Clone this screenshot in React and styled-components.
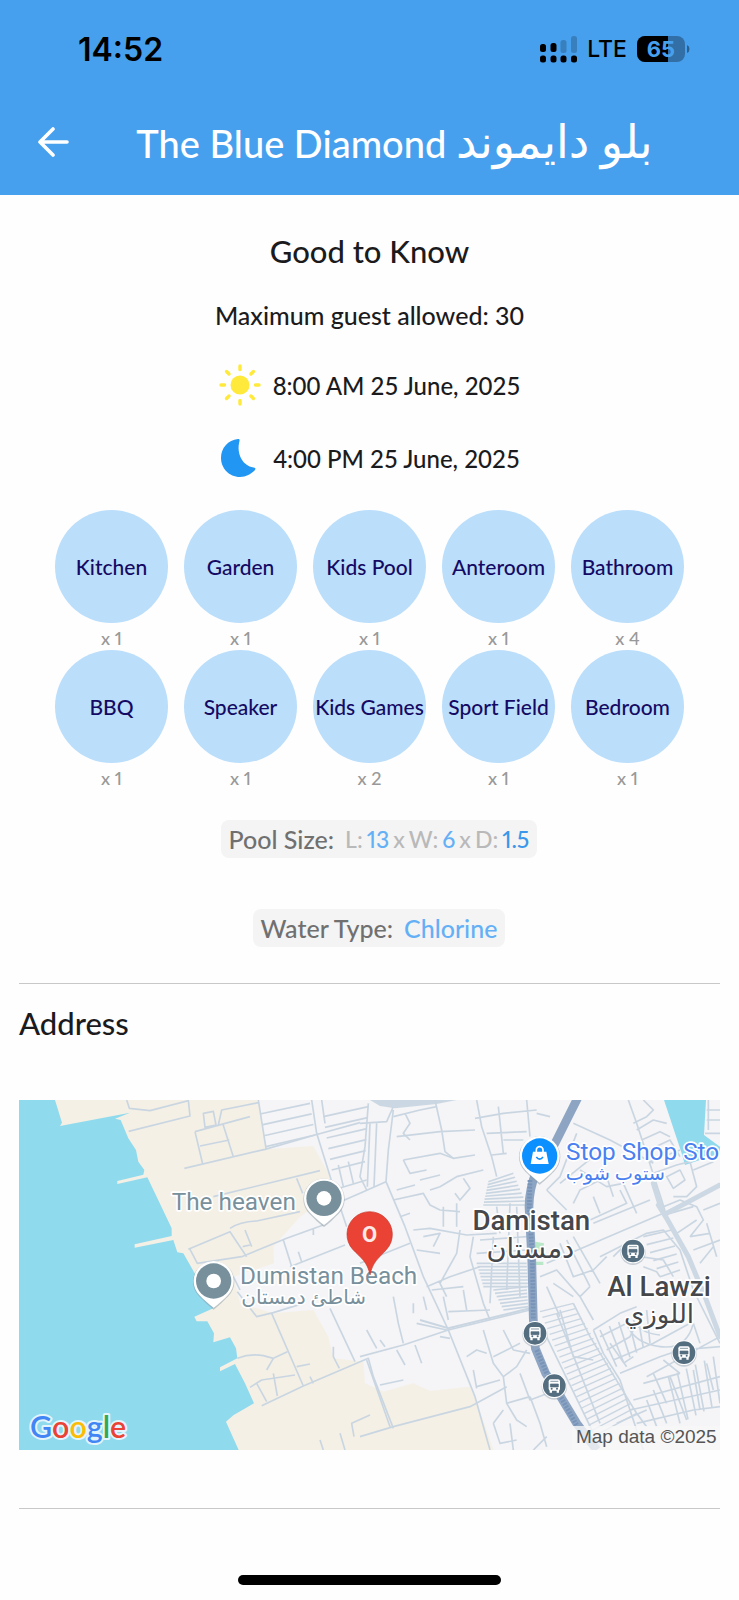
import styled, { createGlobalStyle } from 'styled-components';

const amenities = [
  { name: 'Kitchen', count: 1 },
  { name: 'Garden', count: 1 },
  { name: 'Kids Pool', count: 1 },
  { name: 'Anteroom', count: 1 },
  { name: 'Bathroom', count: 4 },
  { name: 'BBQ', count: 1 },
  { name: 'Speaker', count: 1 },
  { name: 'Kids Games', count: 2 },
  { name: 'Sport Field', count: 1 },
  { name: 'Bedroom', count: 1 },
];

export default function App() {
  return (
    <>
      <GlobalStyle />
      <Header>
        <StatusBar>
          <Clock>14:52</Clock>
          <StatusIcons>
            <Signal />
            <Network>LTE</Network>
            <Battery />
          </StatusIcons>
        </StatusBar>
        <TitleBar>
          <BackButton aria-label="Back">
            <svg width="32" height="32" viewBox="0 0 32 32" fill="none" stroke="#fff" strokeWidth="3.600" strokeLinecap="round" strokeLinejoin="round">
              <path d="M29 16H3M15 3L2 16l13 13" />
            </svg>
          </BackButton>
          <Title>The Blue Diamond <bdi lang="ar">بلو دايموند</bdi></Title>
        </TitleBar>
      </Header>

      <Main>
        <Section>
          <Heading>Good to Know</Heading>
          <Guests>Maximum guest allowed: 30</Guests>
          <TimeRow>
            <Sun />
            <span>8:00 AM 25 June, 2025</span>
          </TimeRow>
          <TimeRow>
            <Moon />
            <span>4:00 PM 25 June, 2025</span>
          </TimeRow>

          <Amenities>
            {amenities.map((item) => (
              <Amenity key={item.name}>
                <Circle>{item.name}</Circle>
                <Count>x {item.count}</Count>
              </Amenity>
            ))}
          </Amenities>

          <Pill>
            <PillLabel>Pool Size:</PillLabel>
            <Dimensions>
              <span>L:</span>
              <Value>13</Value>
              <span>x</span>
              <span>W:</span>
              <Value>6</Value>
              <span>x</span>
              <span>D:</span>
              <Value $strong>1.5</Value>
            </Dimensions>
          </Pill>
          <Pill>
            <PillLabel>Water Type:</PillLabel>
            <Value>Chlorine</Value>
          </Pill>
        </Section>

        <Divider />
        <AddressTitle>Address</AddressTitle>
        <Map />
        <Divider />
      </Main>
      <HomeBar />
    </>
  );
}

function Signal() {
  return (
    <svg width="37" height="27" viewBox="0 0 37 27">
      <g opacity=".2">
        <rect x="20.500" y="4" width="6" height="13" rx="2.500" />
        <rect x="31" y="0" width="6" height="17" rx="2.500" />
      </g>
      <rect x="0" y="8" width="6" height="8" rx="2.500" />
      <rect x="10.500" y="7" width="6" height="9" rx="2.500" />
      {[0, 10.5, 20.5, 31].map((x) => (
        <rect key={x} x={x} y="19.500" width="6" height="7" rx="2.500" />
      ))}
    </svg>
  );
}

function Battery() {
  return (
    <svg width="53" height="26" viewBox="0 0 53 26">
      <defs>
        <clipPath id="charge">
          <rect width="31" height="26" />
        </clipPath>
      </defs>
      <rect width="48" height="26" rx="8" opacity=".3" />
      <rect width="48" height="26" rx="8" clipPath="url(#charge)" />
      <path d="M50 9q2.500 1 2.500 4t-2.500 4z" opacity=".4" />
      <text x="24" y="21" textAnchor="middle" fontFamily="Inter, sans-serif" fontWeight="700" fontSize="22" fill="#47a0ee">65</text>
    </svg>
  );
}

function Sun() {
  return (
    <svg width="42" height="42" viewBox="0 0 42 42">
      <circle cx="21" cy="21" r="9.500" fill="#ffe93b" />
      <g stroke="#ffe93b" strokeWidth="3.400" strokeLinecap="round">
        {[0, 45, 90, 135, 180, 225, 270, 315].map((a) => (
          <path key={a} d="M21 2v3.500" transform={`rotate(${a} 21 21)`} />
        ))}
      </g>
    </svg>
  );
}

function Moon() {
  return (
    <svg width="42" height="42" viewBox="0 0 42 42">
      <path d="M19 2C9 3 2 11 2 21c0 10 8 19 19 19 6 0 11-3 15-7 1-1.500 0-2.500-1.500-2.500C24 29 17 17 20.500 4c.3-1.500-.2-2.100-1.500-2z" fill="#2196f3" />
    </svg>
  );
}

// evenly spaced rungs between two side streets
function rungs(a, b, c, d, n) {
  let path = '';
  for (let i = 0; i <= n; i++) {
    const t = i / n;
    const x1 = a[0] + (b[0] - a[0]) * t;
    const y1 = a[1] + (b[1] - a[1]) * t;
    const x2 = c[0] + (d[0] - c[0]) * t;
    const y2 = c[1] + (d[1] - c[1]) * t;
    path += `M${x1} ${y1}L${x2} ${y2}`;
  }
  return path;
}

function PlacePin({ x, y, color, children }) {
  return (
    <g transform={`translate(${x} ${y})`}>
      <path d="M0 86C-14 76-30 60-44 46A62 62 0 1 1 44 46C30 60 14 76 0 86z" fill="#8a99a5" opacity=".5" />
      <path d="M0 80C-14 70-30 56-43 42A60 60 0 1 1 43 42C30 56 14 70 0 80z" fill="#fff" />
      <circle r="53" fill={color} />
      {children}
    </g>
  );
}

function BusStop({ x, y }) {
  return (
    <g transform={`translate(${x} ${y})`}>
      <circle r="38" cy="4" fill="#9aa8b4" opacity=".5" />
      <circle r="37" fill="#fff" />
      <circle r="34" fill="#546e80" />
      <rect x="-17" y="-19" width="34" height="34" rx="6" fill="#fff" />
      <path d="M-14 13v8h7v-8M7 13v8h7v-8" fill="#fff" />
      <path d="M-12-13h24M-12-5h24v9h-24z" fill="#546e80" stroke="#546e80" strokeWidth="2" />
      <circle cx="-8" cy="9" r="3" fill="#546e80" />
      <circle cx="8" cy="9" r="3" fill="#546e80" />
    </g>
  );
}

function Map() {
  return (
    <MapView viewBox="57 30 2103 1050" role="img" aria-label="Map of Damistan">
      <rect x="57" y="30" width="2103" height="1050" fill="#90daee" />
      {/* land */}
      <path
        fill="#f5f0e5"
        d="M165 30L186 98 180 108 390 68 345 86 362 90 385 145 408 180 415 215 433 240 430 254 352 273V282L442 262 470 320 515 415 515 438 404 463V473L520 450 532 487 550 490 590 560 640 655 583 680 590 694 622 694 642 730 640 757 690 742 708 775 712 805 660 832V844L705 822 735 880 762 940 700 976 678 995 716 1080H2160V30z"
      />
      {/* built-up area */}
      <path
        fill="#f5f4f6"
        d="M775 30L800 178 940 168 985 250 1000 310 900 380 820 470 822 520 700 560 720 640 820 670 940 660 985 740 1000 805 1090 815 1095 880 1150 905 1240 880 1290 903 1410 890 1430 935 1480 1080H2160V30z"
      />
      <path d="M1110 30H1370L1310 42 1185 55 1140 48z" fill="#cbd8e3" />
      <path d="M1992 30H2118L2112 135 2160 170V190L2055 225 2045 190z" fill="#90daee" />
      <path d="M1606 455L1632 460 1630 485 1608 490zM1608 515h22v10h-22z" fill="#b9e8c8" />

      <g fill="none" stroke="#c9d6e2" strokeWidth="5" strokeLinejoin="round">
        {/* coast side */}
        <path d="M380 30L388 55 450 62 565 32 570 78 386 124M610 70L640 64 648 105 615 112zM655 105L665 60 775 38M585 125L750 80M585 125L608 222M600 168L688 150M668 100L700 200M553 235L795 178 945 135 1080 98M775 30L798 175" />
        <path d="M640 320L960 242M890 265L908 310M565 478L690 425 740 500M570 478L592 520 725 500 860 445 970 405M690 415Q720 395 770 393L900 365M735 420L755 470M728 470L750 465M850 450L880 545M870 530L1035 465M940 415V435M895 485L905 515M965 360L1080 310" />
        <path d="M700 560L720 600M712 605L770 680 820 668 910 640M815 670L910 888M990 655L1065 815M712 805Q750 790 790 797L820 805 862 785M820 805L800 840M750 892L785 870 885 855M785 947L910 888 1105 805 1120 860 1180 1015M770 880L800 935M820 850L832 918M890 830L930 822M1000 770V800L1018 835M930 860L940 880M1062 1040L1055 1000 1110 975M960 1050L970 1080M1020 1030L1035 1080" />
        <path d="M935 30L950 130 1000 290 1040 410M965 30L975 100M1105 40L1095 170 1080 260 1100 300M1000 300L1100 270M1015 225L1030 290M1045 215L1060 280" />
        <path d={rungs([780, 72], [798, 170], [930, 40], [945, 135], 3)} />
        <path d={rungs([970, 80], [995, 240], [1105, 50], [1095, 215], 5)} />
        {/* centre */}
        <g transform="translate(1080 0)">
          <path d="M0 100L80 95 100 50M0 310L78 275 85 180 100 60M78 275L135 410 190 560 265 720 345 920 390 1080M30 100L22 290M50 100L42 290" />
          <path d="M100 80L180 60 230 50M110 140L240 125 345 120M135 70L150 100 130 130 150 150M225 30L245 120 255 185 280 205 345 195M350 30L365 110 395 200 410 260M345 85L430 70 530 60M415 50L430 190M380 130L500 125M395 195L440 190M430 150H490M500 30L510 140M530 70L570 80" />
          <path d="M130 210L240 190 280 205M130 210L150 250 200 240M110 300L165 285M100 330L190 310 210 345 240 360 300 365M180 270L240 255M210 300L240 290 290 260 370 240M310 265L330 295 300 330 285 310M290 340V410M250 350V410M160 420L210 415 320 435 410 430M120 380L150 370M300 420L290 490 240 580 260 620M190 440L240 430 220 470M170 480L240 490M200 590L270 560 360 530M340 440L330 500 370 640 390 690M400 440L390 640" />
          <path d="M0 520L150 460M0 800L130 765 265 720 510 660M100 620L115 700 130 760M20 720L50 775M60 750L75 770M160 640V670M190 620L200 660M170 700L260 720M240 740L270 745M110 780L135 825M165 765L185 820M60 885L130 870M20 810L90 1010M0 1040L100 1010 330 950 440 890M215 600L310 590M250 620L265 690M310 600L320 660M265 665L390 660" />
          <path d="M370 720L400 820 430 860 440 940 510 920M320 800L350 780 380 790M340 840L350 895M350 890L420 870M430 860L470 830 500 780M430 720L460 780 510 790M400 800L480 760M440 940L470 990 500 1010M400 1000L430 960M400 1000L420 1060 470 1050M510 920L540 1000 560 1070M450 1000L460 1080M480 850L510 930 590 900M520 1080L560 1040M540 700L720 1070" />
          <path d={rungs([385, 275], [370, 345], [460, 250], [500, 345], 8)} />
          <path d={rungs([350, 520], [370, 590], [500, 520], [505, 590], 7)} />
          <path d={rungs([400, 600], [430, 660], [500, 590], [505, 650], 6)} />
          <path d="M410 350L420 430M450 340L440 600M470 350L480 620M360 450L500 440M350 490L500 480" />
          <path d={rungs([540, 665], [700, 1040], [640, 640], [830, 970], 22)} strokeWidth="4" />
          <path d="M640 640L690 740 830 970 860 1010M600 660L640 800 700 810M590 670L720 1000" />
        </g>
        {/* east side */}
        <g transform="translate(1080 0)">
          <path d="M640 100L750 150M650 130L600 260 560 300M560 300L620 360M750 150L880 220M600 280L700 200M640 340L660 300 740 260M660 240L740 290 790 280 830 370M740 260L760 320M690 390L800 340 780 300M700 400L870 330M560 520L910 370 1080 285M700 320L720 370M540 560L590 540 660 620 700 690M600 460L640 560 700 540M620 450L690 590M640 440L720 580M580 580L640 620M560 590L600 680M690 590L660 620M700 540L740 500" />
          <path d="M805 30L830 100 905 330 920 380M820 100L860 80 880 60 850 30M830 120L880 90 920 100M845 150L900 125 930 140M855 185L930 150 960 200M870 215L960 180M880 250L950 225 990 215 1010 290 980 320 940 320M920 260L960 240 975 270 940 295zM1000 240L1060 215M1035 130H1080M1045 30V120M1040 60H1080M1040 90H1080" />
          <path d="M910 350L960 330 1010 350 1030 390 990 440M930 370L1000 350M1030 360L1080 340M950 430L1010 390M990 440L1050 430M1000 480L1080 450M1040 400L1070 500M1060 470L1020 520" />
          <path d="M720 500L860 430 910 420 960 480 1000 600 1080 760M760 500L790 470M840 500L910 510 940 560M850 530L890 545 900 560M700 720L780 670 830 650M700 720L730 790 780 870 850 1080M720 740L800 700M740 780L810 740 840 680M760 810L880 760 990 700M780 850L900 800 960 780 1080 770M800 700Q820 760 900 770T1000 700M820 690Q840 730 900 735M750 760L800 830M790 820L820 800M860 860L1080 740M850 880L960 850M880 850L920 940M820 930L1080 860M810 960L1080 900M830 1000L1000 960 1080 950M880 900L920 1000M930 860L980 990M1000 840L1020 960M860 930L890 1010M770 1000L860 960M910 810L960 850M1000 700L1020 760M1040 820L1060 900" />
          <path d={rungs([850, 440], [900, 560], [935, 420], [960, 540], 5)} />
          <path d={rungs([925, 860], [1060, 800], [960, 1000], [1080, 940], 5)} />
          <path d={rungs([720, 720], [860, 660], [770, 830], [870, 760], 5)} />
        </g>
      </g>
      <g fill="none" stroke="#ccd8e3" strokeWidth="15" strokeLinecap="round">
        <path d="M1975 345L2000 385 2065 500 2115 620 2160 740M2000 370L2160 285M1960 280L1985 360" />
      </g>
      <path d="M1260 690L1345 715 1590 655" fill="none" stroke="#c9d6e2" strokeWidth="6" />

      {/* highway */}
      <g fill="none" stroke="#8da5c3" strokeWidth="26">
        <path d="M1735 20L1665 160 1610 240Q1587 300 1587 350L1595 500 1600 690 1606 775 1637 850 1670 900 1730 1000 1790 1080" />
        <path d="M1590 270L1588 350 1597 500 1600 690M1610 780L1640 850 1665 890 1730 1005" stroke="#7893b8" strokeWidth="14" strokeDasharray="6 4" />
      </g>

      <BusStop x={1899} y={483} />
      <BusStop x={1605} y={730} />
      <BusStop x={1663} y={887} />
      <BusStop x={2052} y={788} />

      <PlacePin x={972} y={325} color="#78909c">
        <circle r="22" fill="#fff" />
      </PlacePin>
      <PlacePin x={641} y={573} color="#78909c">
        <circle r="22" fill="#fff" />
      </PlacePin>
      <PlacePin x={1619} y={198} color="#0d90ff">
        <path d="M-20-13H20L27 24H-27z" fill="#fff" />
        <path d="M-10-12v-6a10 10 0 0 1 20 0v6" fill="none" stroke="#fff" strokeWidth="5" />
        <path d="M-10 3q10 13 20 0" fill="none" stroke="#0d90ff" strokeWidth="5" />
      </PlacePin>

      <MapLabel x="515" y="360" $size={73} $color="#78909c">The heaven</MapLabel>
      <MapLabel x="720" y="582" $size={73} $color="#78909c">Dumistan Beach</MapLabel>
      <MapLabel x="911" y="642" $size={60} $color="#78909c" textAnchor="middle">شاطئ دمستان</MapLabel>
      <MapLabel x="1698" y="210" $size={73} $color="#4a80f0">Stop Shop Sto</MapLabel>
      <MapLabel x="1846" y="269" $size={58} $color="#4a80f0" textAnchor="middle">ستوب شوب</MapLabel>
      <MapLabel x="1594" y="420" $size={83} $color="#45474a" $weight={500} textAnchor="middle">Damistan</MapLabel>
      <MapLabel x="1591" y="504" $size={82} $color="#45474a" textAnchor="middle">دمستان</MapLabel>
      <MapLabel x="1977" y="617" $size={83} $color="#45474a" $weight={500} textAnchor="middle">Al Lawzi</MapLabel>
      <MapLabel x="1977" y="700" $size={78} $color="#45474a" textAnchor="middle">اللوزي</MapLabel>

      {/* property marker */}
      <path d="M1110 555C1102 515 1084 505 1058 478A68 68 0 1 1 1160 478C1136 505 1118 515 1110 555z" fill="#ea4335" stroke="#c5352a" strokeWidth="2" />
      <text x="1109" y="456" textAnchor="middle" fontFamily="Roboto, sans-serif" fontWeight="700" fontSize="66" fill="#ffe9e6">O</text>

      <Logo x="90" y="1045">
        <tspan fill="#4285f4">G</tspan>
        <tspan fill="#ea4335">o</tspan>
        <tspan fill="#fbbc05">o</tspan>
        <tspan fill="#4285f4">g</tspan>
        <tspan fill="#34a853">l</tspan>
        <tspan fill="#ea4335">e</tspan>
      </Logo>
      <rect x="1715" y="1008" width="445" height="72" fill="#f8f8f9" opacity=".8" />
      <text x="2150" y="1060" textAnchor="end" fontFamily="Liberation Sans, sans-serif" fontSize="57" fill="#555">Map data ©2025</text>
    </MapView>
  );
}

const GlobalStyle = createGlobalStyle`
  * {
    box-sizing: border-box;
  }
  body {
    margin: 0;
    background: #fefefe;
    color: #1b1b1d;
    font-family: Lato, "DejaVu Sans", sans-serif;
    font-weight: 500;
  }
  h1, h2, p, ul {
    margin: 0;
    padding: 0;
    font-weight: inherit;
  }
`

const Header = styled.header`
  background: #47a0ee;
`

const StatusBar = styled.div`
  display: flex;
  justify-content: space-between;
  align-items: center;
  height: 98px;
  padding: 0 49px 0 78px;
  color: #000;
  font-family: Inter, sans-serif;
`

const Clock = styled.span`
  font-size: 32px;
  font-weight: 600;
`

const StatusIcons = styled.div`
  display: flex;
  align-items: center;
  gap: 10px;
`

const Network = styled.span`
  font-size: 23px;
  font-weight: 500;
`

const TitleBar = styled.div`
  display: flex;
  align-items: center;
  height: 97px;
  padding: 0 38px 10px;
`

const BackButton = styled.button`
  display: flex;
  padding: 0;
  border: 0;
  background: none;
  cursor: pointer;
`

const Title = styled.h1`
  flex: 1;
  padding-left: 18px;
  color: #fff;
  font-size: 38px;
  line-height: 48px;
  text-align: center;
  white-space: nowrap;

  bdi {
    font-size: 46px;
  }
`

const Main = styled.main`
  padding: 0 19px;
`

const Section = styled.section`
  display: flex;
  flex-direction: column;
  align-items: center;
  padding: 36px 0;
`

const Heading = styled.h2`
  font-size: 31px;
  line-height: 40px;
`

const Guests = styled.p`
  margin: 28px 0 33px;
  font-size: 25px;
  line-height: 32px;
`

const TimeRow = styled.div`
  display: flex;
  align-items: center;
  gap: 12px;
  height: 42px;
  margin-bottom: 31px;
  font-size: 24px;
`

const Amenities = styled.ul`
  display: grid;
  grid-template-columns: repeat(5, 113px);
  justify-content: center;
  column-gap: 16px;
  margin-bottom: 30px;
  list-style: none;
`

const Amenity = styled.li`
  display: flex;
  flex-direction: column;
  align-items: center;
`

const Circle = styled.div`
  display: flex;
  justify-content: center;
  align-items: center;
  width: 113px;
  height: 113px;
  border-radius: 50%;
  background: #bbdefb;
  color: #150a63;
  font-size: 21px;
  white-space: nowrap;
`

const Count = styled.span`
  height: 27px;
  color: #999;
  font-size: 18px;
  font-variant-numeric: proportional-nums;
  line-height: 30px;
`

const Pill = styled.div`
  display: flex;
  align-items: center;
  gap: 11px;
  height: 38px;
  margin-left: 19px;
  padding: 0 8px;
  border-radius: 8px;
  background: #f4f4f4;
  font-size: 25px;

  & + & {
    margin-top: 51px;
  }
`

const PillLabel = styled.span`
  color: #707070;
`

const Dimensions = styled.span`
  display: flex;
  gap: 4px;
  color: #b9b9b9;
  font-size: 23px;
  font-variant-numeric: proportional-nums;
`

const Value = styled.span`
  color: ${({ $strong }) => ($strong ? '#3a97ea' : '#64b0f6')};
`

const Divider = styled.hr`
  height: 1px;
  margin: 0;
  border: 0;
  background: #c8c8c8;
`

const AddressTitle = styled.h2`
  padding: 19px 0 57px;
  font-size: 31px;
  line-height: 40px;
`

const MapView = styled.svg`
  display: block;
  width: 100%;
  margin-bottom: 58px;
`

const MapLabel = styled.text`
  font-family: Roboto, "DejaVu Sans", sans-serif;
  font-size: ${({ $size }) => $size}px;
  font-weight: ${({ $weight }) => $weight || 400};
  fill: ${({ $color }) => $color};
  stroke: #fff;
  stroke-width: 10px;
  stroke-linejoin: round;
  paint-order: stroke;
`

const Logo = styled.text`
  font-family: Lato, sans-serif;
  font-size: 91px;
  font-weight: 600;
  stroke: #e3f5fb;
  stroke-width: 12px;
  stroke-linejoin: round;
  paint-order: stroke;
`

const HomeBar = styled.div`
  width: 263px;
  height: 10px;
  margin: 66px auto 15px;
  border-radius: 5px;
  background: #000;
`
